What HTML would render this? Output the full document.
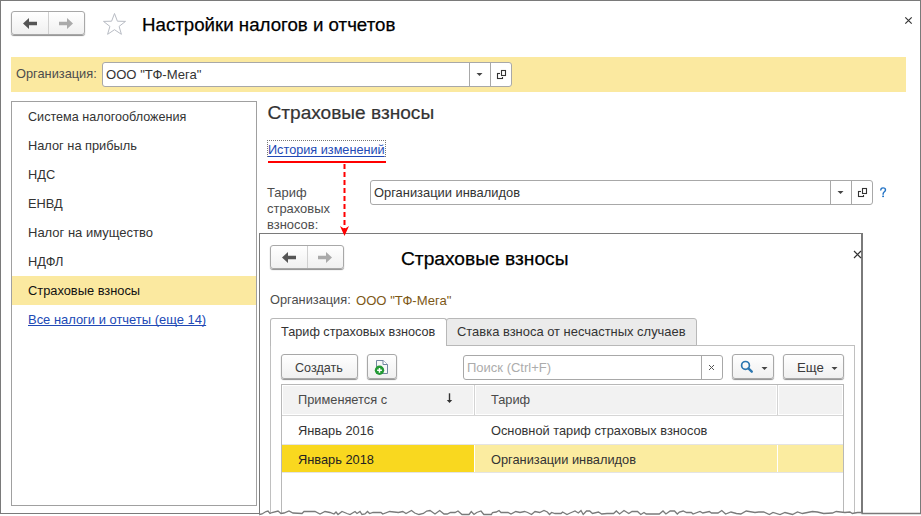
<!DOCTYPE html>
<html><head><meta charset="utf-8">
<style>
*{box-sizing:border-box}
html,body{margin:0;padding:0;width:921px;height:516px;overflow:hidden;background:#fff;font-family:"Liberation Sans",sans-serif;color:#333}
.a{position:absolute}
.t{position:absolute;white-space:nowrap;line-height:1}
.btn{position:absolute;border:1px solid #a8a8a8;border-radius:3px;background:linear-gradient(#fff,#f0f0f0);box-shadow:0 1px 1px rgba(0,0,0,.45)}
.inp{position:absolute;border:1px solid #a8a8a8;border-radius:3px;background:#fff}
.vl{position:absolute;width:1px;background:#a8a8a8}
</style></head><body>

<!-- main window frame -->
<div class="a" style="left:0;top:0;width:921px;height:1px;background:#7a7a7a"></div>
<div class="a" style="left:0;top:0;width:1px;height:514px;background:#7a7a7a"></div>
<div class="a" style="left:920px;top:0;width:1px;height:514px;background:#7a7a7a"></div>
<div class="a" style="left:0;top:513px;width:921px;height:1px;background:#7a7a7a"></div>

<!-- nav buttons -->
<div class="btn" style="left:11px;top:11px;width:74px;height:24px"></div>
<div class="vl" style="left:48px;top:12px;height:22px;background:#d0d0d0"></div>
<svg class="a" style="left:22px;top:17px" width="16" height="13" viewBox="0 0 16 13"><path d="M1 6.5 L7 1 V4.8 H15 V8.2 H7 V12 Z" fill="#555"/></svg>
<svg class="a" style="left:58px;top:17px" width="16" height="13" viewBox="0 0 16 13"><path d="M15 6.5 L9 1 V4.8 H1 V8.2 H9 V12 Z" fill="#aaa"/></svg>

<!-- star -->
<svg class="a" style="left:102px;top:12px" width="25" height="24" viewBox="0 0 25 24"><path d="M12.5 1.5 L15.4 9.2 L23.5 9.4 L17.1 14.4 L19.4 22.3 L12.5 17.7 L5.6 22.3 L7.9 14.4 L1.5 9.4 L9.6 9.2 Z" fill="none" stroke="#b8bcc4" stroke-width="1"/></svg>

<div class="t" style="left:142px;top:15.5px;font-size:18.7px;color:#000;-webkit-text-stroke:0.25px #000">Настройки налогов и отчетов</div>

<!-- close -->
<svg class="a" style="left:904px;top:16px" width="10" height="10" viewBox="0 0 10 10"><path d="M1.3 1.3 L7.7 7.7 M7.7 1.3 L1.3 7.7" stroke="#333" stroke-width="1.15"/></svg>

<!-- org bar -->
<div class="a" style="left:11px;top:57px;width:895px;height:35px;background:#fbe9a0"></div>
<div class="t" style="left:16px;top:68px;font-size:12.8px;color:#4d4d4d">Организация:</div>
<div class="inp" style="left:102px;top:62px;width:410px;height:25px"></div>
<div class="vl" style="left:469px;top:63px;height:23px"></div>
<div class="vl" style="left:490px;top:63px;height:23px"></div>
<div class="t" style="left:106px;top:68px;font-size:13.1px;color:#333">ООО "ТФ-Мега"</div>

<!-- left panel -->
<div class="a" style="left:11px;top:101px;width:246px;height:405px;border:1px solid #a0a0a0"></div>


<div class="a" style="left:12px;top:276px;width:244px;height:29px;background:#fbe9a0"></div>
<div class="t" style="left:28px;top:111px;font-size:12.6px">Система налогообложения</div>
<div class="t" style="left:28px;top:140px;font-size:12.8px">Налог на прибыль</div>
<div class="t" style="left:28px;top:169px;font-size:12.8px">НДС</div>
<div class="t" style="left:28px;top:198px;font-size:12.8px">ЕНВД</div>
<div class="t" style="left:28px;top:226px;font-size:13px">Налог на имущество</div>
<div class="t" style="left:28px;top:256px;font-size:12.8px">НДФЛ</div>
<div class="t" style="left:28px;top:285px;font-size:12.85px;color:#111">Страховые взносы</div>
<div class="t" style="left:28px;top:314px;font-size:12.95px;color:#2149b5;text-decoration:underline;text-decoration-skip-ink:none">Все налоги и отчеты (еще 14)</div>

<!-- right content -->
<div class="t" style="left:267.5px;top:103px;font-size:19.1px;color:#333;-webkit-text-stroke:0.2px #333">Страховые взносы</div>
<div class="a" style="left:267px;top:140px;width:119px;height:17px;border:1px dotted #777"></div>
<div class="t" style="left:268px;top:144px;font-size:12.7px;color:#2149b5;text-decoration:underline;text-decoration-skip-ink:none;text-underline-offset:2px">История изменений</div>
<div class="a" style="left:268px;top:161px;width:118px;height:2px;background:#f00"></div>
<div class="t" style="left:267px;top:185px;font-size:12.95px;line-height:16px;white-space:normal;width:80px;color:#4d4d4d">Тариф<br>страховых<br>взносов:</div>
<div class="inp" style="left:370px;top:180px;width:503px;height:25px"></div>
<div class="vl" style="left:830px;top:181px;height:23px"></div>
<div class="vl" style="left:851px;top:181px;height:23px"></div>
<div class="t" style="left:374px;top:186.5px;font-size:12.9px">Организации инвалидов</div>
<svg class="a" style="left:876px;top:183px" width="14" height="18" viewBox="0 0 14 18"><path d="M4.8 7.1 C4.8 5.6 5.8 4.9 7 4.9 C8.5 4.9 9.5 5.7 9.5 7 C9.5 8.6 7.3 9 7.1 10.8 V11.3" fill="none" stroke="#2474c6" stroke-width="1.4" stroke-linecap="round"/><rect x="6.2" y="12.6" width="1.8" height="1.5" fill="#2474c6"/></svg>

<!-- dialog -->
<div class="a" style="left:259px;top:233px;width:604px;height:290px;background:#fff;border-left:1px solid #7a7a7a;border-top:1px solid #7a7a7a;border-right:2px solid #7a7a7a"></div>
<div class="btn" style="left:270px;top:245px;width:74px;height:24px"></div>
<div class="vl" style="left:307px;top:246px;height:22px;background:#d0d0d0"></div>
<div class="t" style="left:401px;top:249px;font-size:19.2px;color:#000;-webkit-text-stroke:0.25px #000">Страховые взносы</div>
<div class="t" style="left:270px;top:294px;font-size:12.8px;color:#4d4d4d">Организация:</div>
<div class="t" style="left:356px;top:294px;font-size:13.1px;color:#7d5816">ООО "ТФ-Мега"</div>

<svg class="a" style="left:281px;top:251px" width="16" height="13" viewBox="0 0 16 13"><path d="M1 6.5 L7 1 V4.8 H15 V8.2 H7 V12 Z" fill="#555"/></svg>
<svg class="a" style="left:317px;top:251px" width="16" height="13" viewBox="0 0 16 13"><path d="M15 6.5 L9 1 V4.8 H1 V8.2 H9 V12 Z" fill="#aaa"/></svg>
<svg class="a" style="left:850px;top:248px" width="12" height="12" viewBox="0 0 12 12"><path d="M4 3 L11 10 M11 3 L4 10" stroke="#333" stroke-width="1.2"/></svg>

<!-- tabs -->
<div class="a" style="left:270px;top:345px;width:585px;height:180px;border:1px solid #c0c0c0"></div>
<div class="a" style="left:446px;top:318px;width:251px;height:28px;background:#ebebeb;border:1px solid #b8b8b8;border-radius:3px 3px 0 0"></div>
<div class="a" style="left:270px;top:318px;width:177px;height:28px;background:#fff;border:1px solid #b8b8b8;border-bottom:none;border-radius:3px 3px 0 0"></div>
<div class="a" style="left:271px;top:345px;width:175px;height:1px;background:#fff"></div>
<div class="t" style="left:281px;top:326px;font-size:12.7px">Тариф страховых взносов</div>
<div class="t" style="left:457px;top:326px;font-size:12.95px">Ставка взноса от несчастных случаев</div>

<!-- toolbar -->
<div class="btn" style="left:281px;top:354px;width:77px;height:25px"></div>
<div class="t" style="left:295px;top:362px;font-size:12.6px;color:#3d3d3d">Создать</div>
<div class="btn" style="left:367px;top:354px;width:30px;height:25px"></div>
<div class="inp" style="left:463px;top:355px;width:260px;height:25px"></div>
<div class="vl" style="left:701px;top:356px;height:23px"></div>
<div class="t" style="left:467px;top:361px;font-size:13px;color:#acacac">Поиск (Ctrl+F)</div>
<div class="btn" style="left:732px;top:354px;width:42px;height:25px"></div>
<div class="btn" style="left:783px;top:354px;width:61px;height:25px"></div>
<div class="t" style="left:797px;top:360.5px;font-size:13.2px;color:#3a3a3a">Еще</div>

<!-- table -->
<div class="a" style="left:281px;top:384px;width:563px;height:140px;border:1px solid #b8b8b8;background:#fff"></div>
<div class="a" style="left:282px;top:385px;width:561px;height:31px;background:#f2f2f2;border-bottom:1px solid #d6d6d6"></div>
<div class="a" style="left:474px;top:385px;width:1px;height:30px;background:#d4d4d4"></div>
<div class="a" style="left:777px;top:385px;width:1px;height:30px;background:#d4d4d4"></div>
<div class="a" style="left:282px;top:385px;width:192px;height:30px;box-shadow:inset 0 0 0 1px #fff"></div>
<div class="a" style="left:475px;top:385px;width:302px;height:30px;box-shadow:inset 0 0 0 1px #fff"></div>
<div class="a" style="left:778px;top:385px;width:65px;height:30px;box-shadow:inset 0 0 0 1px #fff"></div>
<div class="t" style="left:298px;top:394px;font-size:12.8px;color:#4a4a4a">Применяется с</div>
<svg class="a" style="left:444px;top:391px" width="11" height="14" viewBox="0 0 11 14"><path d="M5.5 2.3 V10.5" stroke="#333" stroke-width="1.4"/><path d="M2.8 9.1 H8.2 L5.5 12.1 Z" fill="#333"/></svg>
<div class="t" style="left:491px;top:394px;font-size:12.8px;color:#4a4a4a">Тариф</div>
<div class="a" style="left:282px;top:444px;width:561px;height:1px;background:#e4e4e4"></div>
<div class="t" style="left:298px;top:425px;font-size:12.8px">Январь 2016</div>
<div class="t" style="left:491px;top:425px;font-size:12.8px">Основной тариф страховых взносов</div>
<div class="a" style="left:282px;top:445px;width:561px;height:27px;background:#fbeca0"></div>
<div class="a" style="left:282px;top:445px;width:192px;height:27px;background:#f9d81f"></div>
<div class="a" style="left:777px;top:445px;width:1px;height:27px;background:#fff"></div>
<div class="a" style="left:474px;top:445px;width:1px;height:27px;background:#fff"></div>
<div class="a" style="left:282px;top:472px;width:561px;height:1px;background:#e4e4e4"></div>
<div class="t" style="left:298px;top:454px;font-size:12.8px;color:#222">Январь 2018</div>
<div class="t" style="left:491px;top:454px;font-size:12.8px">Организации инвалидов</div>

<!-- torn edge -->
<svg class="a" style="left:0;top:495px" width="921" height="21" viewBox="0 0 921 21"><path d="M259.5 19.5 L262 19 L266 16.5 L268 16 L270 18.5 L272 17.5 L278 16 L281 18.5 L284 18 L289 16 L293 18 L302 18.5 L304 16.5 L315 16.5 L320 19 L325 16.5 L330 17.5 L334 19 L336 17 L338 19.5 L342 16.5 L347 18.5 L350 19.5 L355 16.5 L357 18.5 L360 16.5 L362 19.5 L365 19 L367.5 16.5 L369.6 18.5 L373 17.5 L381 17.5 L382.7 19 L389.7 16.5 L398.4 17.5 L402.8 16.5 L406 18.5 L411.5 15.5 L414.7 18 L419 19.5 L423.4 18.5 L426.7 16 L430 15.5 L435 19 L439.7 15.5 L444 19 L447.3 19 L450.5 17.5 L455 17.5 L458 16 L462 19.5 L469 19.5 L471.3 16.5 L474 19.5 L476.7 17.5 L481 16 L483.8 19.5 L491.4 19.5 L492.5 17.5 L496.3 17 L499 15.5 L501 17.5 L508 17.5 L511 19 L515.8 16.5 L520 17.5 L524.5 16.5 L527.7 17.5 L531.5 19.5 L535 16.5 L539.7 17.5 L544 15.5 L547.3 17 L549.5 19.5 L551.6 17.5 L555 18.5 L561 18.5 L562.6 17 L567 19.5 L570.2 18 L575 16 L578.3 18 L581 15.5 L583.2 19.5 L586.5 16 L589.7 16 L592.5 18.5 L598.4 17 L601.7 19 L607 18.5 L613.6 18.5 L616.3 16 L619.6 19 L624 15.5 L628.8 18.5 L632 16.5 L637.5 16.5 L640.8 19.5 L644 17.5 L646.2 19 L655 19 L659.3 19 L663 16 L665.9 19 L670.2 16 L674.5 16 L677.3 19 L679.4 17 L683.2 16 L686.5 17.5 L691.4 17.5 L693 19 L700 16.5 L702.8 18 L709.3 16.5 L711.5 18 L718 18 L721.8 15.5 L725.6 19 L731 17 L736.4 18.5 L740.8 19 L746.2 16 L755 17.5 L758.7 17 L763.7 17 L769.4 19.5 L773 17.5 L780 19.5 L785 17.5 L792.5 19.5 L797.5 17 L802.4 18.5 L807.4 17.5 L812.4 16.5 L817.4 17 L823.7 18.5 L832.4 18 L836.2 16.5 L844.9 17.5 L849.9 17 L852.4 18.5 L857.4 17.5 L862 17.5 L862 18.5 L921 18.5 L921 21 L259 21 Z" fill="#fff"/><path d="M0 18.5 H259.5 V19.5 " fill="none"/><path d="M259.5 19.5 L262 19 L266 16.5 L268 16 L270 18.5 L272 17.5 L278 16 L281 18.5 L284 18 L289 16 L293 18 L302 18.5 L304 16.5 L315 16.5 L320 19 L325 16.5 L330 17.5 L334 19 L336 17 L338 19.5 L342 16.5 L347 18.5 L350 19.5 L355 16.5 L357 18.5 L360 16.5 L362 19.5 L365 19 L367.5 16.5 L369.6 18.5 L373 17.5 L381 17.5 L382.7 19 L389.7 16.5 L398.4 17.5 L402.8 16.5 L406 18.5 L411.5 15.5 L414.7 18 L419 19.5 L423.4 18.5 L426.7 16 L430 15.5 L435 19 L439.7 15.5 L444 19 L447.3 19 L450.5 17.5 L455 17.5 L458 16 L462 19.5 L469 19.5 L471.3 16.5 L474 19.5 L476.7 17.5 L481 16 L483.8 19.5 L491.4 19.5 L492.5 17.5 L496.3 17 L499 15.5 L501 17.5 L508 17.5 L511 19 L515.8 16.5 L520 17.5 L524.5 16.5 L527.7 17.5 L531.5 19.5 L535 16.5 L539.7 17.5 L544 15.5 L547.3 17 L549.5 19.5 L551.6 17.5 L555 18.5 L561 18.5 L562.6 17 L567 19.5 L570.2 18 L575 16 L578.3 18 L581 15.5 L583.2 19.5 L586.5 16 L589.7 16 L592.5 18.5 L598.4 17 L601.7 19 L607 18.5 L613.6 18.5 L616.3 16 L619.6 19 L624 15.5 L628.8 18.5 L632 16.5 L637.5 16.5 L640.8 19.5 L644 17.5 L646.2 19 L655 19 L659.3 19 L663 16 L665.9 19 L670.2 16 L674.5 16 L677.3 19 L679.4 17 L683.2 16 L686.5 17.5 L691.4 17.5 L693 19 L700 16.5 L702.8 18 L709.3 16.5 L711.5 18 L718 18 L721.8 15.5 L725.6 19 L731 17 L736.4 18.5 L740.8 19 L746.2 16 L755 17.5 L758.7 17 L763.7 17 L769.4 19.5 L773 17.5 L780 19.5 L785 17.5 L792.5 19.5 L797.5 17 L802.4 18.5 L807.4 17.5 L812.4 16.5 L817.4 17 L823.7 18.5 L832.4 18 L836.2 16.5 L844.9 17.5 L849.9 17 L852.4 18.5 L857.4 17.5 L862 17.5 L862 18.5 L921 18.5" fill="none" stroke="#7a7a7a" stroke-width="1.3"/><path d="M0 18.5 H260" stroke="#7a7a7a" stroke-width="1"/></svg>
<!-- dropdown + open icons -->
<svg class="a" style="left:476px;top:72px" width="7" height="5" viewBox="0 0 7 5"><path d="M0.5 1 H6.5 L3.5 4 Z" fill="#444"/></svg>
<svg class="a" style="left:495px;top:68px" width="14" height="14" viewBox="0 0 14 14"><rect x="2.5" y="5.5" width="5" height="5" fill="none" stroke="#333" stroke-width="1.1"/><rect x="5" y="1" width="7" height="8" fill="#fff"/><rect x="6.5" y="2.5" width="4" height="5" fill="#fff" stroke="#333" stroke-width="1.1"/></svg>
<svg class="a" style="left:837px;top:190px" width="7" height="5" viewBox="0 0 7 5"><path d="M0.5 1 H6.5 L3.5 4 Z" fill="#444"/></svg>
<svg class="a" style="left:856px;top:186px" width="14" height="14" viewBox="0 0 14 14"><rect x="2.5" y="5.5" width="5" height="5" fill="none" stroke="#333" stroke-width="1.1"/><rect x="5" y="1" width="7" height="8" fill="#fff"/><rect x="6.5" y="2.5" width="4" height="5" fill="#fff" stroke="#333" stroke-width="1.1"/></svg>
<!-- search x -->
<svg class="a" style="left:707px;top:363px" width="9" height="9" viewBox="0 0 9 9"><path d="M2 2 L7 7 M7 2 L2 7" stroke="#555" stroke-width="1"/></svg>
<!-- magnifier -->
<svg class="a" style="left:739px;top:359px" width="16" height="16" viewBox="0 0 16 16"><circle cx="6.5" cy="6.4" r="3.9" fill="none" stroke="#2b76b0" stroke-width="1.7"/><path d="M9.4 9.4 L12.8 12.7" stroke="#2b76b0" stroke-width="2.3" stroke-linecap="round"/></svg>
<svg class="a" style="left:761px;top:365px" width="7" height="6" viewBox="0 0 7 6"><path d="M0.5 2 H6.5 L3.5 5 Z" fill="#444"/></svg>
<svg class="a" style="left:831px;top:365px" width="7" height="6" viewBox="0 0 7 6"><path d="M0.5 2 H6.5 L3.5 5 Z" fill="#444"/></svg>
<!-- create doc icon -->
<svg class="a" style="left:372px;top:358px" width="20" height="18" viewBox="0 0 20 18"><path d="M4.5 2.5 H11 L15.5 6.5 V15.5 H4.5 Z" fill="#f8f8f8" stroke="#7387a0" stroke-width="1"/><path d="M11 2.5 V6.5 H15.5" fill="#fff" stroke="#7387a0" stroke-width="1"/><circle cx="7.5" cy="12.3" r="4.7" fill="#239a35"/><path d="M7.5 9.9 V14.7 M5.1 12.3 H9.9" stroke="#fff" stroke-width="1.5"/></svg>
<!-- red dashed arrow -->
<svg class="a" style="left:338px;top:163px" width="14" height="75" viewBox="0 0 14 75"><path d="M6.5 1 V66" stroke="#f00" stroke-width="2" stroke-dasharray="5 3"/><path d="M2 63 L6.5 73 L11 63 L6.5 66 Z" fill="#f00"/></svg>
</body></html>
